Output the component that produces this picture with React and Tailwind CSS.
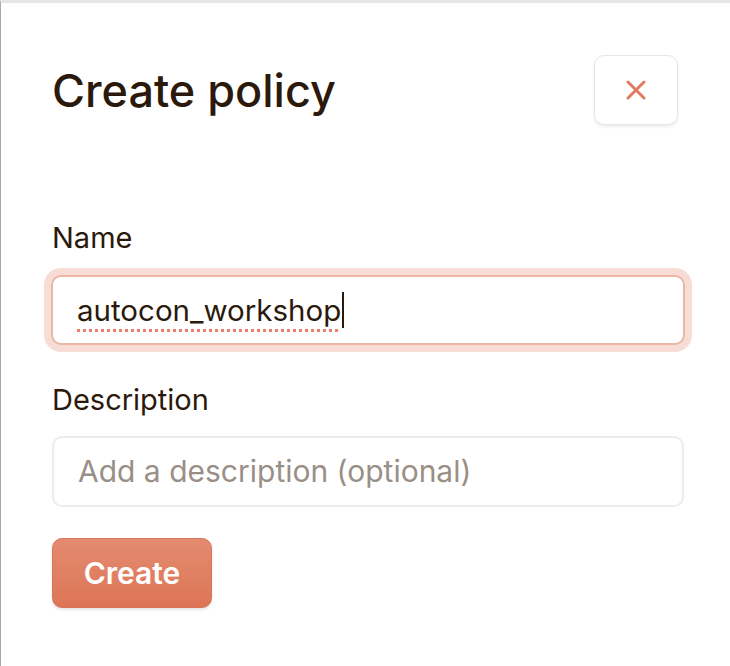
export default function App() {
  return (
    <div
      className="w-[730px] h-[666px] bg-white border-t-[3px] border-t-[#e6e6e6] border-l border-l-[#a8a8a8] overflow-hidden"
      style={{ fontFamily: "Inter, 'Noto Sans', sans-serif" }}
    >
      <div className="pl-[51px] pr-[46px]">
        <div className="flex items-center justify-between pt-[52px] pr-[6px]">
          <h1 className="text-[45px] font-medium text-[#2b1a0c] leading-none">Create policy</h1>
          <button className="w-[84px] h-[70px] rounded-[10px] border border-[#e6e6e6] bg-white shadow-[0_2px_3px_rgba(0,0,0,0.08)] flex items-center justify-center">
            <svg width="20" height="20" viewBox="0 0 20 20" fill="none">
              <path d="M2 2L18 18M18 2L2 18" stroke="#e07a5f" strokeWidth="3" strokeLinecap="round" />
            </svg>
          </button>
        </div>

        <div className="mt-[98px]">
          <label className="block text-[29px] text-[#2b1a0c] leading-none">Name</label>
          <div className="mt-[16px] -ml-[8px] -mr-[8px] p-[7px] rounded-[17px] bg-[#f8ddd6]">
            <div className="h-[70px] rounded-[10px] border-[2px] border-[#edb6a4] bg-white flex items-center pl-[24px]">
              <span className="text-[29.5px] text-[#2b1a0c] underline decoration-dotted decoration-[#f27d6c] decoration-[3px] underline-offset-[8px]">
                autocon_workshop
              </span>
              <span className="w-[2px] h-[36px] bg-[#2b1a0c] ml-[1px]" />
            </div>
          </div>
        </div>

        <div className="mt-[33px]">
          <label className="block text-[29px] text-[#2b1a0c] leading-none">Description</label>
          <div className="mt-[22px] h-[71px] rounded-[10px] border-[2px] border-[#ececec] bg-white flex items-center pl-[24px]">
            <span className="text-[30px] text-[#9a8f86]">Add a description (optional)</span>
          </div>
        </div>

        <button className="mt-[31px] w-[160px] h-[70px] rounded-[10px] bg-gradient-to-b from-[#e48b70] to-[#dc7555] border border-[#d9735a] shadow-[0_2px_3px_rgba(0,0,0,0.1)] text-white text-[30px] font-semibold">
          Create
        </button>
      </div>
    </div>
  );
}
